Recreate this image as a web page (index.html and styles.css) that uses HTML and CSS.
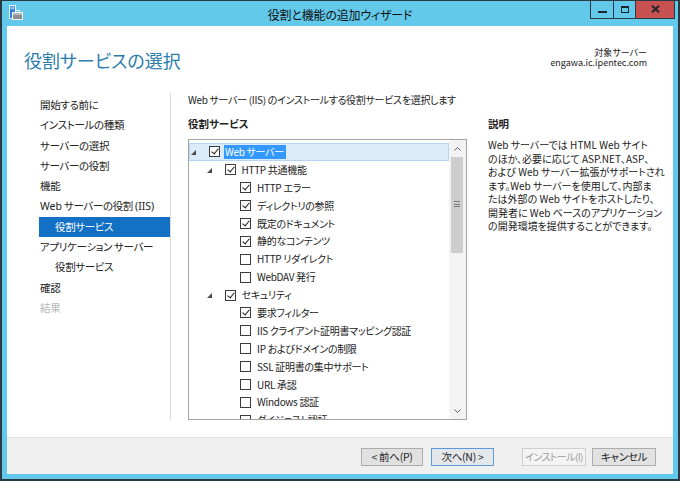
FILE: index.html
```html
<!DOCTYPE html>
<html lang="ja">
<head>
<meta charset="utf-8">
<title>役割と機能の追加ウィザード</title>
<link rel="stylesheet" href="styles.css">
</head>
<body>
<div class="window">
  <div class="titlebar">
    <div class="tb-left">
      <svg class="appicon" width="16" height="16" viewBox="0 0 16 16">
        <rect x="1.5" y="0.5" width="6" height="13" fill="#2f7fd0" stroke="#e8f6fc" stroke-width="1"/>
        <rect x="2.5" y="1.5" width="4" height="3" fill="#8cc4ee"/>
        <rect x="4.5" y="7.5" width="10" height="7" fill="#8a8f94" stroke="#f2f2f2" stroke-width="1"/>
        <path d="M7.5 7.5 V5.5 H11.5 V7.5" fill="none" stroke="#f2f2f2" stroke-width="1"/>
        <rect x="5" y="8" width="9" height="2" fill="#b9bdc1"/>
      </svg>
    </div>
    <div class="title">役割と機能の追加ウィザード</div>
    <div class="tb-right">
      <div class="ctl min"><span class="min-glyph"></span></div>
      <div class="ctl max"><span class="max-glyph"></span></div>
      <div class="ctl close">
        <svg width="9" height="8" viewBox="0 0 9 8"><path d="M1 0.8 L8 7.2 M8 0.8 L1 7.2" stroke="#1d262b" stroke-width="1.9"/></svg>
      </div>
    </div>
  </div>

  <div class="client">
    <div class="main">
      <div class="header">
        <h1 class="page-title">役割サービスの選択</h1>
        <div class="target">
          <div class="target-label">対象サーバー</div>
          <div class="target-name">engawa.ic.ipentec.com</div>
        </div>
      </div>

      <div class="body">
        <nav class="nav">
          <div class="nav-item">開始する前に</div>
          <div class="nav-item">インストールの種類</div>
          <div class="nav-item">サーバーの選択</div>
          <div class="nav-item">サーバーの役割</div>
          <div class="nav-item">機能</div>
          <div class="nav-item"><span class="lat">Web</span> サーバーの役割 <span class="lat">(IIS)</span></div>
          <div class="nav-item sub active">役割サービス</div>
          <div class="nav-item">アプリケーション サーバー</div>
          <div class="nav-item sub">役割サービス</div>
          <div class="nav-item">確認</div>
          <div class="nav-item disabled">結果</div>
        </nav>

        <div class="content">
          <div class="instr">Web サーバー (IIS) のインストールする役割サービスを選択します</div>
          <div class="cols">
            <div class="left-col">
              <div class="sect">役割サービス</div>
              <div class="tree">
                <div class="rows">
                  <div class="row l0 hl"><span class="exp open"></span><span class="cb on"></span><span class="lbl sel">Web サーバー</span></div>
                  <div class="row l1"><span class="exp open"></span><span class="cb on"></span><span class="lbl">HTTP 共通機能</span></div>
                  <div class="row l2"><span class="exp"></span><span class="cb on"></span><span class="lbl">HTTP エラー</span></div>
                  <div class="row l2"><span class="exp"></span><span class="cb on"></span><span class="lbl">ディレクトリの参照</span></div>
                  <div class="row l2"><span class="exp"></span><span class="cb on"></span><span class="lbl">既定のドキュメント</span></div>
                  <div class="row l2"><span class="exp"></span><span class="cb on"></span><span class="lbl">静的なコンテンツ</span></div>
                  <div class="row l2"><span class="exp"></span><span class="cb"></span><span class="lbl">HTTP リダイレクト</span></div>
                  <div class="row l2"><span class="exp"></span><span class="cb"></span><span class="lbl">WebDAV 発行</span></div>
                  <div class="row l1"><span class="exp open"></span><span class="cb on"></span><span class="lbl">セキュリティ</span></div>
                  <div class="row l2"><span class="exp"></span><span class="cb on"></span><span class="lbl">要求フィルター</span></div>
                  <div class="row l2"><span class="exp"></span><span class="cb"></span><span class="lbl">IIS クライアント証明書マッピング認証</span></div>
                  <div class="row l2"><span class="exp"></span><span class="cb"></span><span class="lbl">IP およびドメインの制限</span></div>
                  <div class="row l2"><span class="exp"></span><span class="cb"></span><span class="lbl">SSL 証明書の集中サポート</span></div>
                  <div class="row l2"><span class="exp"></span><span class="cb"></span><span class="lbl">URL 承認</span></div>
                  <div class="row l2"><span class="exp"></span><span class="cb"></span><span class="lbl">Windows 認証</span></div>
                  <div class="row l2"><span class="exp"></span><span class="cb"></span><span class="lbl">ダイジェスト認証</span></div>
                </div>
                <div class="vscroll">
                  <div class="sb-btn"><svg width="7" height="4" viewBox="0 0 7 4"><path d="M0.5 3.5 L3.5 0.5 L6.5 3.5" fill="none" stroke="#606060" stroke-width="1"/></svg></div>
                  <div class="sb-track">
                    <div class="sb-thumb"><span class="grip"></span></div>
                  </div>
                  <div class="sb-btn"><svg width="7" height="4" viewBox="0 0 7 4"><path d="M0.5 0.5 L3.5 3.5 L6.5 0.5" fill="none" stroke="#606060" stroke-width="1"/></svg></div>
                </div>
              </div>
            </div>
            <div class="desc">
              <div class="sect">説明</div>
              <p class="desc-text">Web サーバーでは HTML Web サイト<br>のほか、必要に応じて ASP.NET、ASP、<br>および Web サーバー拡張がサポートされ<br>ます。Web サーバーを使用して、内部ま<br>たは外部の Web サイトをホストしたり、<br>開発者に Web ベースのアプリケーション<br>の開発環境を提供することができます。</p>
            </div>
          </div>
        </div>
      </div>
    </div>

    <div class="footer">
      <button class="btn b-prev">&lt; 前へ(P)</button>
      <button class="btn b-next">次へ(N) &gt;</button>
      <button class="btn b-install" disabled>インストール(I)</button>
      <button class="btn b-cancel">キャンセル</button>
    </div>
  </div>
</div>
</body>
</html>
```
FILE: styles.css
```css
* { box-sizing: border-box; }
html, body { margin: 0; padding: 0; }
body {
  width: 680px;
  height: 481px;
  overflow: hidden;
  background: #2b3a42;
  font-family: "Noto Sans CJK JP", sans-serif;
  font-feature-settings: "palt";
  font-size: 11px;
  color: #1e1e1e;
}

.window {
  width: 680px;
  height: 481px;
  background: #63c9ea;
  border: 2px solid #2b3a42;
  border-top-width: 1px;
  display: flex;
  flex-direction: column;
}

/* title bar */
.titlebar {
  height: 25px;
  flex: none;
  display: grid;
  grid-template-columns: 1fr auto 1fr;
}
.tb-left { padding: 4px 0 0 6px; }
.appicon { display: block; }
.title {
  font-size: 12px;
  line-height: 14px;
  padding-top: 7px;
  color: #111;
  letter-spacing: -0.2px;
}
.tb-right {
  display: flex;
  justify-content: flex-end;
  align-items: flex-start;
  padding-right: 3px;
}
.ctl {
  height: 18px;
  border-bottom: 1px solid #2b3a42;
  border-right: 1px solid #2b3a42;
  display: flex;
  align-items: center;
  justify-content: center;
}
.min { width: 24px; border-left: 1px solid #2b3a42; }
.max { width: 22px; }
.close { width: 39px; background: #c75050; }
.min-glyph {
  width: 9px;
  height: 2px;
  background: #1d262b;
  margin-top: 5px;
}
.max-glyph {
  width: 8px;
  height: 7px;
  border: 1px solid #1d262b;
  border-top-width: 2px;
  margin-top: -1px;
}
.close svg { display: block; margin-top: -1px; }

/* client */
.client {
  flex: 1;
  margin: 0 5px 5px;
  background: #fff;
  display: flex;
  flex-direction: column;
}
.main {
  flex: 1;
  display: flex;
  flex-direction: column;
}
.header {
  height: 67px;
  flex: none;
  display: flex;
  justify-content: space-between;
  align-items: flex-start;
  padding: 21px 26px 0 17px;
}
.page-title {
  margin: 1px 0 0;
  font-size: 18px;
  line-height: 24px;
  font-weight: normal;
  color: #2a7cad;
}
.target {
  text-align: right;
  font-size: 9px;
  color: #222;
  display: flex;
  flex-direction: column;
  align-items: flex-end;
  gap: 0;
}
.target-label { line-height: 11px; height: 11px; margin-top: -0.5px; }
.target-name { line-height: 11px; height: 11px; margin-top: -1px; }

.body {
  flex: 1;
  display: flex;
  padding-bottom: 17px;
}
.nav {
  width: 164px;
  flex: none;
  border-right: 1px solid #dadada;
  padding: 2px 0 0 32px;
}
.nav-item {
  height: 20.3px;
  line-height: 20.3px;
  padding-left: 1px;
  white-space: nowrap;
  color: #222;
  font-size: 10.5px;
  letter-spacing: -0.35px;
}
.nav-item .lat { font-family: "Noto Sans", sans-serif; letter-spacing: 0; }
.nav-item.sub { padding-left: 16px; }
.nav-item.active { background: #1271c4; color: #fff; }
.nav-item.disabled { color: #b8b8b8; }

.content {
  flex: 1;
  padding-left: 17px;
  display: flex;
  flex-direction: column;
}
.instr {
  line-height: 14px;
  font-size: 10px;
  letter-spacing: -0.3px;
  color: #222;
}
.cols {
  display: flex;
  gap: 21px;
  margin-top: 10px;
  flex: 1;
}
.left-col {
  width: 279px;
  display: flex;
  flex-direction: column;
}
.sect {
  font-weight: bold;
  font-size: 10.5px;
  line-height: 14px;
  color: #222;
}

.tree {
  margin-top: 8px;
  height: 281px;
  border: 1px solid #a3a3a3;
  display: flex;
}
.rows {
  flex: 1;
  overflow: hidden;
  padding-top: 3px;
}
.row {
  height: 17.9px;
  display: flex;
  align-items: center;
  white-space: nowrap;
  color: #222;
  font-size: 10px;
  letter-spacing: -0.3px;
  border: 1px solid transparent;
}
.row.hl {
  background: #dcebfa;
  border-color: #b5d5f2;
}
.l0 { padding-left: 2px; }
.l1 { padding-left: 17.5px; }
.l2 { padding-left: 33px; }
.exp {
  width: 17px;
  height: 100%;
  flex: none;
  position: relative;
}
.exp.open::after {
  content: "";
  position: absolute;
  left: -1px;
  top: 6px;
  width: 0;
  height: 0;
  border-left: 5px solid transparent;
  border-bottom: 5px solid #4a4a4a;
}
.cb {
  width: 11px;
  height: 11px;
  flex: none;
  border: 1px solid #3c3c3c;
  background: #fff;
  margin-right: 5px;
  position: relative;
}
.cb.on::after {
  content: "";
  position: absolute;
  left: 3px;
  top: 0px;
  width: 3px;
  height: 6px;
  border-right: 1.5px solid #1e1e1e;
  border-bottom: 1.5px solid #1e1e1e;
  transform: rotate(40deg);
}
.lbl { line-height: 14px; padding: 0 1px; }
.lbl.sel { background: #3399ff; color: #fff; margin-left: -1px; padding: 0 2px 0 1px; }

.vscroll {
  width: 17px;
  flex: none;
  background: #f3f3f3;
  display: flex;
  flex-direction: column;
}
.sb-btn {
  height: 17px;
  flex: none;
  display: flex;
  align-items: center;
  justify-content: center;
}
.sb-btn svg { display: block; }
.sb-track {
  flex: 1;
  padding: 0 3px 0 2px;
}
.sb-thumb {
  height: 96px;
  background: #cdcdcd;
  display: flex;
  justify-content: center;
  padding-top: 44px;
}
.grip {
  width: 6px;
  height: 6px;
  border-top: 1px solid #7a7a7a;
  border-bottom: 1px solid #7a7a7a;
  background: linear-gradient(#7a7a7a, #7a7a7a) center / 6px 1px no-repeat;
}

.desc { flex: 1; }
.desc-text {
  margin: 7px 0 0;
  font-size: 10px;
  line-height: 13.5px;
  color: #222;
  white-space: nowrap;
}

/* footer */
.footer {
  height: 37px;
  flex: none;
  background: #f0f0f0;
  border-top: 1px solid #dfdfdf;
  display: flex;
  justify-content: flex-end;
  align-items: flex-start;
  padding: 10px 17px 0 0;
}
.btn {
  height: 18px;
  padding: 0;
  font-family: inherit;
  font-feature-settings: "palt";
  font-size: 10.5px;
  letter-spacing: -0.3px;
  line-height: 16px;
  white-space: nowrap;
  color: #1e1e1e;
  background: #e1e1e1;
  border: 1px solid #adadad;
}
.b-prev { width: 62px; }
.b-next { width: 63px; margin-left: 8px; border-color: #5a9be0; background: #e3e6ea; }
.b-install {
  width: 64px;
  margin-left: 28px;
  background: #f4f4f4;
  border-color: #cfcfcf;
  color: #9c9c9c;
  font-size: 10px;
  letter-spacing: -0.6px;
}
.b-cancel { width: 64px; margin-left: 6px; }
```
